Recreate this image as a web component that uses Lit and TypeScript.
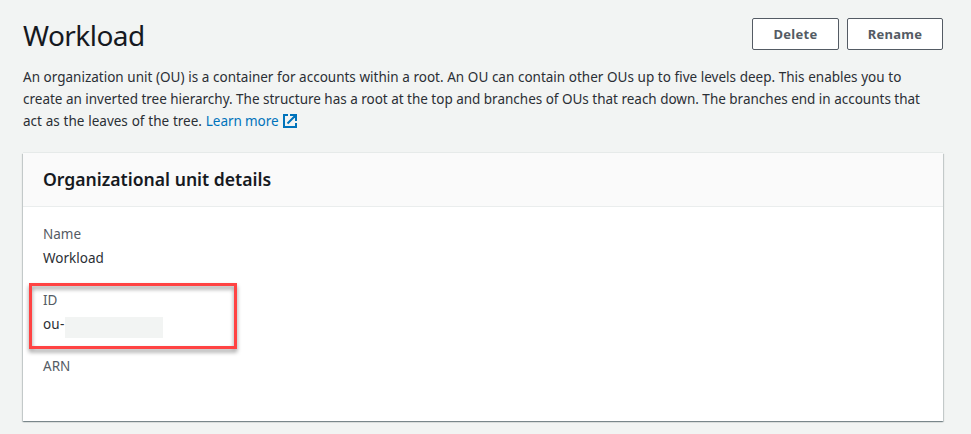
import { LitElement, html, css } from "lit";
import { customElement } from "lit/decorators.js";

@customElement("app-root")
export class AppRoot extends LitElement {
  static styles = css`
    :host {
      display: block;
      box-sizing: border-box;
      height: 434px;
      padding: 17px 28px 13px 23px;
      overflow: hidden;
      background: #f2f4f3;
      color: #16191f;
      font: 13.5px/22px "Noto Sans", "Open Sans", sans-serif;
      white-space: nowrap;
    }
    .top { display: flex; justify-content: space-between; height: 49px; }
    h1 { margin: 0; font-size: 28px; font-weight: 400; line-height: 36px; letter-spacing: -0.55px; }
    .actions { display: flex; gap: 8px; padding-top: 1px; }
    button {
      box-sizing: border-box;
      height: 32px;
      padding: 0;
      border: 1px solid #545b64;
      border-radius: 2px;
      background: #fff;
      color: #545b64;
      font: 700 13px/20px "Noto Sans", "Open Sans", sans-serif;
      letter-spacing: 0.25px;
    }
    .delete { width: 87px; }
    .rename { width: 96px; }
    .intro { margin: 0 0 21px; color: #2b2f35; }
    .line { display: block; }
    .l1 { word-spacing: 0.13px; }
    .l2 { word-spacing: -0.06px; }
    .l3 { word-spacing: 0.3px; }
    .link { color: #0073bb; text-decoration: none; word-spacing: -0.5px; }
    .link svg { width: 14px; height: 14px; margin-left: 4px; vertical-align: -2px; }
    .card {
      box-sizing: border-box;
      height: 268px;
      background: #fff;
      box-shadow: 0 1px 1px 0 rgba(0, 28, 36, 0.3), 1px 1px 1px 0 rgba(0, 28, 36, 0.15),
        -1px 1px 1px 0 rgba(0, 28, 36, 0.15), 0 -1px 0 0 #e6eae9;
    }
    .head { box-sizing: border-box; height: 54px; padding: 15px 20px; background: #fafafa; border-bottom: 1px solid #eaeded; }
    h2 { margin: 0; font-size: 17.6px; font-weight: 600; line-height: 22px; }
    dl { margin: 0; padding: 16px 20px; }
    .field { position: relative; height: 66px; }
    dt { color: #545b64; margin-bottom: 2px; }
    dd { display: flex; margin: 0; color: #2b2f35; }
    .prefix { width: 22px; letter-spacing: 0.2px; }
    .redacted { width: 98px; height: 21px; margin-top: 4px; background: #f2f4f3; }
    .marker {
      position: absolute;
      left: -14px;
      top: -6px;
      box-sizing: border-box;
      width: 208px;
      height: 66px;
      border: 3px solid #ff4343;
      filter: drop-shadow(0 3px 2px rgba(0, 0, 0, 0.42));
    }
  `;

  render() {
    return html`
      <div class="top">
        <h1>Workload</h1>
        <div class="actions">
          <button class="delete">Delete</button>
          <button class="rename">Rename</button>
        </div>
      </div>
      <p class="intro">
        <span class="line l1">An organization unit (OU) is a container for accounts within a root. An OU can contain other OUs up to five levels deep. This enables you to</span>
        <span class="line l2">create an inverted tree hierarchy. The structure has a root at the top and branches of OUs that reach down. The branches end in accounts that</span>
        <span class="line l3">act as the leaves of the tree. <a class="link">Learn more<svg viewBox="0 0 14 14" fill="none" stroke="#0073bb" stroke-width="2"><path d="M5 1H1v12h12V9M7 1h6v6M13 1L4.5 9.5" /></svg></a></span>
      </p>
      <section class="card">
        <div class="head"><h2>Organizational unit details</h2></div>
        <dl>
          <div class="field"><dt>Name</dt><dd>Workload</dd></div>
          <div class="field">
            <dt>ID</dt>
            <dd><span class="prefix">ou-</span><span class="redacted"></span></dd>
            <span class="marker"></span>
          </div>
          <div class="field"><dt>ARN</dt></div>
        </dl>
      </section>
    `;
  }
}
